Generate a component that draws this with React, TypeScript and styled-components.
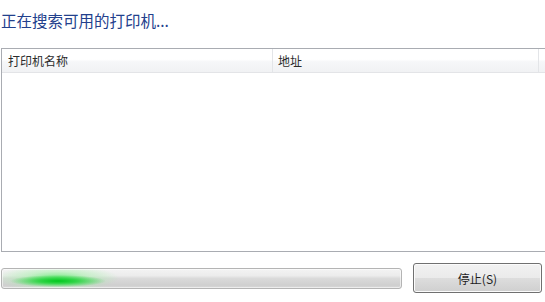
import React from "react";
import styled, { createGlobalStyle } from "styled-components";

const GlobalStyle = createGlobalStyle`
    html, body {
        margin: 0;
        padding: 0;
        background: #ffffff;
    }
    body {
        font-family: "Noto Sans CJK SC", "Noto Sans", sans-serif;
    }
`;

const Page = styled.div`
    width: 545px;
    height: 302px;
    overflow: hidden;
    box-sizing: border-box;
    padding: 10px 0 0 1px;
    display: flex;
    flex-direction: column;
`;

const Title = styled.div`
    font-size: 15.5px;
    line-height: 20px;
    color: #22408c;
    white-space: nowrap;
`;

const ListBox = styled.div`
    margin-top: 18px;
    width: 580px;
    height: 204px;
    box-sizing: border-box;
    border: 1px solid #a9acb2;
    background: #ffffff;
    display: flex;
    flex-direction: column;
`;

const HeaderRow = styled.div`
    display: grid;
    grid-template-columns: 271px 266px 1fr;
    height: 24px;
    box-sizing: border-box;
    border-bottom: 1px solid #e3e4e7;
    background: linear-gradient(to bottom, #ffffff 0%, #ffffff 45%, #f6f7f9 55%, #f1f2f4 100%);
`;

const HeaderCell = styled.div`
    display: flex;
    align-items: center;
    padding-left: ${(p: { $pad?: number }) => p.$pad ?? 6}px;
    font-size: 12px;
    color: #2b2b2b;
    border-right: 1px solid #e3e5e8;
    white-space: nowrap;
`;

const BottomRow = styled.div`
    margin-top: 11px;
    height: 30px;
    display: flex;
    align-items: center;
    gap: 11px;
`;

const Progress = styled.div`
    width: 401px;
    height: 21px;
    box-sizing: border-box;
    border: 1px solid #b4b4b4;
    border-radius: 3px;
    background:
        radial-gradient(ellipse 48px 6px at 56px 12px, rgba(0, 200, 30, 1) 0%, rgba(30, 210, 55, 0.85) 40%, rgba(120, 230, 130, 0) 100%),
        radial-gradient(ellipse 62px 13px at 55px 9px, rgba(100, 235, 115, 0.85) 0%, rgba(160, 240, 165, 0.5) 50%, rgba(210, 240, 210, 0) 100%),
        linear-gradient(to bottom, #f3f3f3 0%, #ececec 35%, #dadada 50%, #cfcfcf 85%, #d8d8d8 100%);
    box-shadow: inset 0 0 0 1px rgba(255, 255, 255, 0.55);
`;

const Button = styled.button`
    width: 129px;
    height: 30px;
    padding: 0;
    box-sizing: border-box;
    border: 1px solid #707070;
    border-radius: 3px;
    background: linear-gradient(to bottom, #f2f2f2 0%, #ebebeb 49%, #dddddd 51%, #cfcfcf 100%);
    box-shadow: inset 0 0 0 1px #fbfbfb;
    font-family: "Noto Sans CJK SC", "Noto Sans", sans-serif;
    font-size: 12px;
    color: #1e1e1e;
    cursor: pointer;
`;

const App: React.FC = () => {
    return (
        <>
            <GlobalStyle />
            <Page>
                <Title>正在搜索可用的打印机...</Title>
                <ListBox>
                    <HeaderRow>
                        <HeaderCell $pad={6}>打印机名称</HeaderCell>
                        <HeaderCell $pad={5}>地址</HeaderCell>
                        <HeaderCell />
                    </HeaderRow>
                </ListBox>
                <BottomRow>
                    <Progress />
                    <Button type="button">停止(S)</Button>
                </BottomRow>
            </Page>
        </>
    );
};

export default App;
